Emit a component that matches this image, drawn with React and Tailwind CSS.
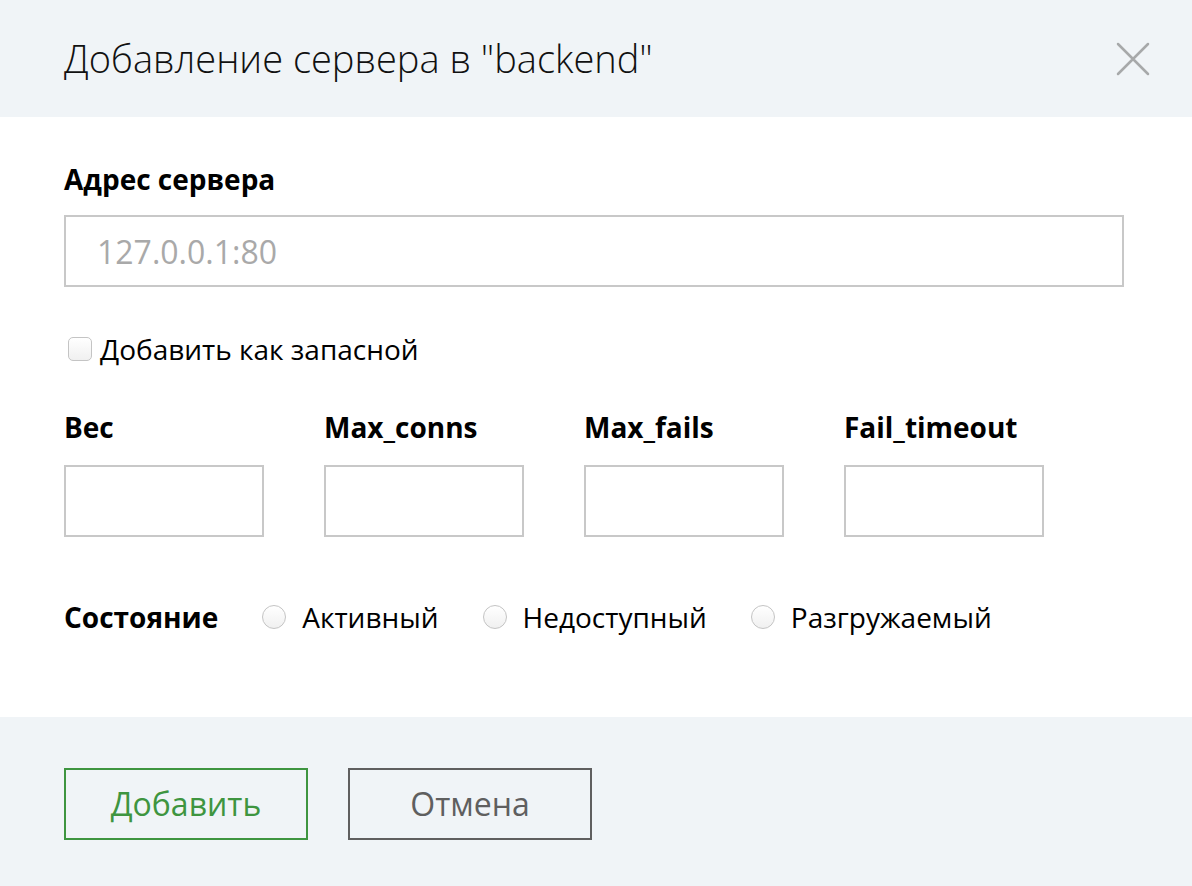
import { useState } from 'react';

const numericFields = ['Вес', 'Max_conns', 'Max_fails', 'Fail_timeout'];
const states = ['Активный', 'Недоступный', 'Разгружаемый'];

const CloseIcon = () => (
  <svg width="36" height="36" viewBox="0 0 36 36" aria-hidden="true">
    <path d="M3 3L33 33M33 3L3 33" stroke="#a7a9aa" strokeWidth="2.5" strokeLinecap="round" />
  </svg>
);

export default function App() {
  const [state, setState] = useState(null);

  return (
    <div className="flex h-[886px] w-[1192px] flex-col bg-white font-['Open_Sans',sans-serif] text-black">
      <header className="flex h-[117px] items-center justify-between bg-[#f0f4f7] pl-16 pr-[35px]">
        <h1 className="text-[38px] font-light text-[#111]">Добавление сервера в "backend"</h1>
        <button type="button" className="flex h-12 w-12 items-center justify-center" aria-label="Закрыть">
          <CloseIcon />
        </button>
      </header>

      <main className="flex-1 px-16 pt-[44px]">
        <label className="block text-[28px] font-bold leading-[36px]">Адрес сервера</label>
        <input
          type="text"
          placeholder="127.0.0.1:80"
          className="mt-[18px] h-[72px] w-[1060px] border-2 border-[#c8c8c8] px-[31px] text-[32px] text-[#333] outline-none placeholder:text-[#a9a9a9]"
        />

        <label className="mt-[44px] flex items-center gap-[8px] pl-[4px] text-[28px] leading-[36px]">
          <span className="h-[24px] w-[24px] rounded-[5px] border border-[#c4c4c4] bg-gradient-to-b from-white to-[#f0f0f0]" />
          Добавить как запасной
        </label>

        <div className="mt-[42px] flex gap-[60px]">
          {numericFields.map((name) => (
            <div key={name} className="flex flex-col">
              <span className="text-[28px] font-bold leading-[36px]">{name}</span>
              <input type="text" className="mt-[20px] h-[72px] w-[200px] border-2 border-[#c8c8c8] px-3 text-[28px] outline-none" />
            </div>
          ))}
        </div>

        <div className="mt-[62px] flex items-center text-[28px] leading-[36px]">
          <span className="mr-[44px] font-bold">Состояние</span>
          {states.map((label) => (
            <label key={label} className="mr-[44px] flex items-center gap-[16px]" onClick={() => setState(label)}>
              <span className="flex h-[24px] w-[24px] items-center justify-center rounded-full border border-[#c4c4c4] bg-gradient-to-b from-white to-[#f0f0f0]">
                {state === label ? <span className="h-2.5 w-2.5 rounded-full bg-[#333]" /> : null}
              </span>
              {label}
            </label>
          ))}
        </div>
      </main>

      <footer className="flex h-[169px] items-start gap-[40px] bg-[#f0f4f7] px-16 pt-[51px]">
        <button
          type="button"
          className="h-[72px] w-[244px] border-2 border-[#3e9540] text-[32px] text-[#3e9540]"
        >
          Добавить
        </button>
        <button
          type="button"
          className="h-[72px] w-[244px] border-2 border-[#5f5f5f] text-[32px] text-[#5f5f5f]"
        >
          Отмена
        </button>
      </footer>
    </div>
  );
}
